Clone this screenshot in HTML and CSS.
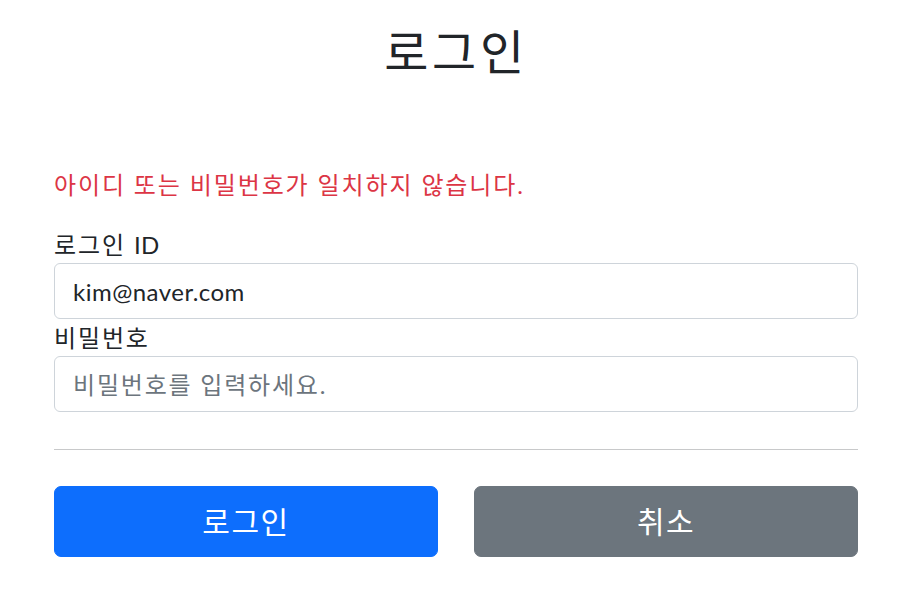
FILE: index.html
```html
<!DOCTYPE html>
<html lang="ko">
<head>
<meta charset="utf-8">
<title>로그인</title>
<link rel="stylesheet" href="styles.css">
</head>
<body>
<div class="container">
  <div class="title-block">
    <h2 class="title">로그인</h2>
  </div>
  <form class="login-form">
    <p class="field-error">아이디 또는 비밀번호가 일치하지 않습니다.</p>
    <div class="field">
      <label class="field-label" for="loginId">로그인 <span class="latin">ID</span></label>
      <input class="form-control" type="text" id="loginId" value="kim@naver.com">
    </div>
    <div class="field">
      <label class="field-label" for="password">비밀번호</label>
      <input class="form-control" type="password" id="password" placeholder="비밀번호를 입력하세요.">
    </div>
    <hr class="divider">
    <div class="actions">
      <button class="btn btn-primary" type="submit">로그인</button>
      <button class="btn btn-secondary" type="button">취소</button>
    </div>
  </form>
</div>
</body>
</html>
```
FILE: styles.css
```css
* { box-sizing: border-box; }

html, body {
  margin: 0;
  padding: 0;
  background: #ffffff;
}

body {
  font-family: Lato, "Noto Sans CJK KR", sans-serif;
  color: #212529;
  font-size: 24px;
  line-height: 36px;
  letter-spacing: 0.078em;
}

.latin {
  letter-spacing: 0.02em;
}

.container {
  width: 804px;
  margin-left: 54px;
}

.title-block {
  padding-top: 23px;
  padding-bottom: 86px;
  text-align: center;
}

.title {
  margin: 0;
  font-size: 48px;
  line-height: 58px;
  font-weight: 400;
  letter-spacing: 0.075em;
}

.login-form {
  margin: 0;
}

.field-error {
  margin: 0 0 23px;
  color: #dc3545;
  font-size: 24px;
  line-height: 36px;
}

.field-label {
  display: block;
  font-size: 24px;
  line-height: 37px;
}

.form-control {
  display: block;
  width: 100%;
  height: 56px;
  padding: 9px 18px;
  font-family: inherit;
  font-size: 24px;
  line-height: 36px;
  letter-spacing: 0.02em;
  color: #212529;
  background: #ffffff;
  border: 1px solid #ced4da;
  border-radius: 6px;
  outline: none;
}

.form-control::placeholder {
  color: #6c757d;
  opacity: 1;
  letter-spacing: 0.075em;
}

.divider {
  margin: 37px 0 36px;
  border: 0;
  border-top: 1px solid #c8c9ca;
  height: 0;
}

.actions {
  display: grid;
  grid-template-columns: 1fr 1fr;
  column-gap: 36px;
}

.btn {
  display: block;
  width: 100%;
  height: 71px;
  padding: 12px 24px;
  font-family: inherit;
  font-size: 30px;
  line-height: 45px;
  letter-spacing: 0.05em;
  color: #ffffff;
  border: 1px solid transparent;
  border-radius: 7px;
  text-align: center;
  cursor: pointer;
}

.btn-primary {
  background: #0d6efd;
  border-color: #0d6efd;
}

.btn-secondary {
  background: #6c757d;
  border-color: #6c757d;
}
```
